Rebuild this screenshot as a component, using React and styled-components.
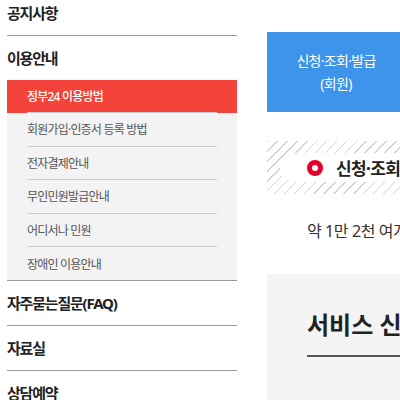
import styled, { createGlobalStyle } from "styled-components";

const GlobalStyle = createGlobalStyle`
  html, body {
    margin: 0;
    padding: 0;
    background: #fff;
    overflow: hidden;
  }
  body {
    font-family: "Noto Sans", "Noto Sans CJK KR", sans-serif;
  }
`;

const menu = [
  { title: "공지사항" },
  {
    title: "이용안내",
    open: true,
    children: [
      { label: "정부24 이용방법", active: true },
      { label: "회원가입·인증서 등록 방법" },
      { label: "전자결제안내" },
      { label: "무인민원발급안내" },
      { label: "어디서나 민원" },
      { label: "장애인 이용안내" },
    ],
  },
  { title: "자주묻는질문(FAQ)" },
  { title: "자료실" },
  { title: "상담예약" },
];

const App = () => {
  return (
    <>
      <GlobalStyle />
      <Page>
        <SideNav>
          {menu.map((item) => (
            <NavItem key={item.title}>
              <NavTitle>{item.title}</NavTitle>
              {item.open && (
                <SubList>
                  {item.children.map((sub, i) => (
                    <SubItem key={sub.label} $active={sub.active}>
                      <SubLink $last={i === item.children.length - 1}>
                        {sub.label}
                      </SubLink>
                    </SubItem>
                  ))}
                </SubList>
              )}
            </NavItem>
          ))}
        </SideNav>

        <Main>
          <ApplyButton>
            신청·조회·발급
            <br />
            (회원)
          </ApplyButton>

          <HatchBox>
            <Pill>
              <RingIcon />
              <PillText>신청·조회·발급 서비스</PillText>
            </Pill>
          </HatchBox>

          <Lead>약 1만 2천 여개의 민원서비스를 제공합니다</Lead>

          <ServiceBox>
            <ServiceTitle>서비스 신청 안내</ServiceTitle>
          </ServiceBox>
        </Main>
      </Page>
    </>
  );
};

const Page = styled.div`
  width: 400px;
  height: 400px;
  overflow: hidden;
  display: flex;
  gap: 30px;
`;

const SideNav = styled.nav`
  flex: 0 0 230px;
  margin-top: -9px;
  margin-left: 7px;
`;

const NavItem = styled.div`
  border-bottom: 1px solid #999;
`;

const NavTitle = styled.div`
  height: 44px;
  line-height: 44px;
  font-size: 15px;
  font-weight: 700;
  letter-spacing: -1.2px;
  color: #222;
`;

const SubList = styled.div`
  background: #f3f3f3;
`;

const SubItem = styled.div`
  padding: 0 20px;
  background: ${(p) => (p.$active ? "#f4433a" : "transparent")};
  color: ${(p) => (p.$active ? "#fff" : "#555")};
  font-size: 12px;
  letter-spacing: -0.8px;
  font-weight: ${(p) => (p.$active ? 500 : 400)};

  & > div {
    height: ${(p) => (p.$active ? "32px" : "32.6px")};
  }
`;

const SubLink = styled.div`
  display: flex;
  align-items: center;
  border-bottom: ${(p) => (p.$last ? "none" : "1px solid #ccc")};
`;

const Main = styled.div`
  flex: 0 0 320px;
  padding-top: 32px;
`;

const ApplyButton = styled.div`
  width: 138px;
  height: 80px;
  background: #3d94ea;
  color: #fff;
  font-size: 14px;
  letter-spacing: -0.7px;
  line-height: 23px;
  display: flex;
  flex-direction: column;
  align-items: center;
  justify-content: center;
  text-align: center;
`;

const HatchBox = styled.div`
  margin-top: 29px;
  padding: 12px 0 12px 13px;
  background: repeating-linear-gradient(
    135deg,
    #d2d2d2 0 1px,
    transparent 1px 7px
  );
`;

const Pill = styled.div`
  height: 29px;
  background: #fff;
  border-radius: 15px 0 0 15px;
  display: flex;
  align-items: center;
  gap: 13px;
  padding-left: 27px;
`;

const RingIcon = styled.span`
  width: 6px;
  height: 6px;
  border-radius: 50%;
  border: 5px solid #e4002b;
  flex: 0 0 auto;
`;

const PillText = styled.span`
  font-size: 17px;
  font-weight: 700;
  letter-spacing: -0.6px;
  color: #222;
  white-space: nowrap;
`;

const Lead = styled.p`
  margin: 0;
  padding: 24px 0 0 40px;
  height: 57px;
  box-sizing: border-box;
  font-size: 16px;
  letter-spacing: -0.4px;
  color: #333;
  white-space: nowrap;
`;

const ServiceBox = styled.div`
  margin-top: 23px;
  height: 200px;
  background: #f4f4f4;
  padding: 32px 0 0 40px;
  box-sizing: border-box;
`;

const ServiceTitle = styled.h2`
  margin: 0;
  padding-bottom: 14px;
  border-bottom: 2px solid #555;
  font-size: 24px;
  font-weight: 700;
  letter-spacing: 0;
  color: #222;
  white-space: nowrap;
`;

export default App;
